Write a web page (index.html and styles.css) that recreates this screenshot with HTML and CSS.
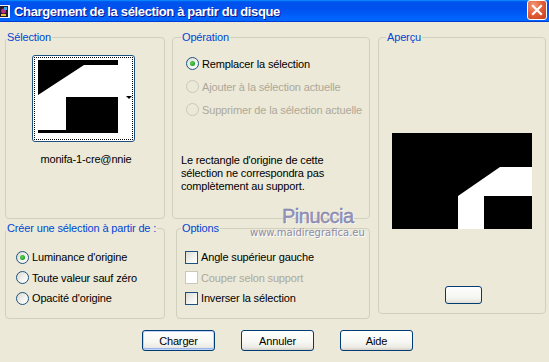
FILE: index.html
```html
<!DOCTYPE html>
<html lang="fr">
<head>
<meta charset="utf-8">
<title>Chargement de la sélection à partir du disque</title>
<link rel="stylesheet" href="styles.css">
</head>
<body>
<div class="titlebar">
  <svg class="app-icon" width="10" height="13" viewBox="0 0 10 13">
    <rect x="0" y="0" width="10" height="13" fill="#f4f4f4"/>
    <rect x="0" y="1" width="8" height="11" fill="#241a30"/>
    <circle cx="3.5" cy="6" r="2.5" fill="#c23088"/>
    <rect x="4" y="2" width="3" height="3" fill="#3aa0e8"/>
    <rect x="1" y="9" width="5" height="2" fill="#e6c232"/>
  </svg>
  <span class="title">Chargement de la sélection à partir du disque</span>
  <span class="close">
    <svg width="12" height="12" viewBox="0 0 12 12"><path d="M2 2 L10 10 M10 2 L2 10" stroke="#fff" stroke-width="2.2" stroke-linecap="square"/></svg>
  </span>
</div>

<div class="client">
  <div class="groups">
    <fieldset class="grp g-sel">
      <legend class="lg-sel">Sélection</legend>
      <div class="thumb">
        <div class="thumb-focus">
          <svg class="thumb-img" width="80" height="73" viewBox="0 0 80 73">
            <rect width="80" height="73" fill="#000"/>
            <polygon points="0,35 46,5 80,5 80,37 28,37 28,70 0,70" fill="#fff"/>
          </svg>
          <div class="thumb-side"><span class="arrow"></span></div>
        </div>
      </div>
      <div class="thumb-name">monifa-1-cre@nnie</div>
    </fieldset>

    <fieldset class="grp g-op">
      <legend class="lg-op">Opération</legend>
      <div class="op-list">
        <div class="row r23"><span class="radio checked"></span><span>Remplacer la sélection</span></div>
        <div class="row r23 disabled"><span class="radio off"></span><span>Ajouter à la sélection actuelle</span></div>
        <div class="row r23 disabled"><span class="radio off"></span><span>Supprimer de la sélection actuelle</span></div>
      </div>
      <p class="info">Le rectangle d'origine de cette<br>sélection ne correspondra pas<br>complètement au support.</p>
    </fieldset>

    <fieldset class="grp g-prev">
      <legend class="lg-prev">Aperçu</legend>
      <svg class="preview" width="140" height="96" viewBox="0 0 140 96">
        <rect width="140" height="96" fill="#000"/>
        <polygon points="66,63 108,34 140,34 140,63 92,63 92,96 66,96" fill="#fff"/>
      </svg>
      <div class="mini-btn"></div>
    </fieldset>

    <fieldset class="grp g-create">
      <legend class="lg-create">Créer une sélection à partir de :</legend>
      <div class="list create-list">
        <div class="row r20"><span class="radio checked"></span><span>Luminance d'origine</span></div>
        <div class="row r20"><span class="radio"></span><span>Toute valeur sauf zéro</span></div>
        <div class="row r20"><span class="radio"></span><span>Opacité d'origine</span></div>
      </div>
    </fieldset>

    <fieldset class="grp g-opts">
      <legend class="lg-opts">Options</legend>
      <div class="list opts-list">
        <div class="row r20"><span class="check"></span><span>Angle supérieur gauche</span></div>
        <div class="row r20 disabled"><span class="check off"></span><span>Couper selon support</span></div>
        <div class="row r20"><span class="check"></span><span>Inverser la sélection</span></div>
      </div>
    </fieldset>
  </div>

  <div class="buttons">
    <button class="btn default">Charger</button>
    <button class="btn">Annuler</button>
    <button class="btn">Aide</button>
  </div>
</div>

<div class="watermark">
  <div class="wm-name">Pinuccia</div>
  <div class="wm-url">www.maidiregrafica.eu</div>
</div>
</body>
</html>
```

FILE: styles.css
```css
* { box-sizing: border-box; }
html, body { margin: 0; }
body {
  width: 549px;
  height: 362px;
  overflow: hidden;
  position: relative;
  background: #ECE9D8;
  font-family: "Liberation Sans", Arial, sans-serif;
  font-size: 11px;
  letter-spacing: -0.15px;
  color: #000;
}

/* Title bar */
.titlebar {
  height: 22px;
  display: flex;
  align-items: center;
  padding-right: 2px;
  background: linear-gradient(180deg, #0997ff 0%, #0053ee 8%, #0050ee 40%, #0066ff 88%, #0066ff 93%, #005bff 95%, #003dd7 96%, #003dd7 100%);
}
.app-icon { flex: none; display: block; }
.title {
  flex: 1;
  margin-left: 4px;
  color: #fff;
  font-weight: bold;
  font-size: 13px;
  letter-spacing: -0.35px;
  text-shadow: 1px 1px 0 #0f1089;
  white-space: nowrap;
}
.close {
  flex: none;
  align-self: flex-start;
  width: 20px;
  height: 20px;
  border: 1px solid #fff;
  border-radius: 3px;
  background: radial-gradient(circle at 30% 25%, #f29a7c 0%, #e5603a 45%, #c63c1a 100%);
  display: flex;
  align-items: center;
  justify-content: center;
}
.close svg { display: block; }

/* Client area */
.client { padding: 8px 0 0 5px; }
.groups {
  display: grid;
  grid-template-columns: 160px 198px 169px;
  grid-template-rows: 189px 98px;
  column-gap: 7px;
  row-gap: 2px;
}
.grp {
  margin: 0;
  padding: 0;
  min-width: 0;
  border: 1px solid #D0D0BF;
  border-radius: 4px;
}
.grp legend {
  padding: 0 1px;
  color: #0046D5;
  font-size: 11px;
  line-height: 14px;
}
.lg-op { margin-left: 8px; }
.lg-prev { margin-left: 7px; }
.lg-opts { margin-left: 4px; }

.g-sel { grid-column: 1; grid-row: 1; }
.g-op { grid-column: 2; grid-row: 1; }
.g-prev {
  grid-column: 3;
  grid-row: 1 / 3;
  margin-left: 1px;
  height: 284px;
  align-self: start;
}
.g-create { grid-column: 1; grid-row: 2; }
.g-opts {
  grid-column: 2;
  grid-row: 2;
  margin-left: 4px;
  width: 194px;
  justify-self: start;
}

/* Selection thumbnail */
.thumb {
  margin: 11px 0 0 26px;
  width: 103px;
  height: 87px;
  border: 1px solid #1C5180;
  border-radius: 3px;
  background: #fff;
  padding: 1px;
}
.thumb-focus {
  height: 100%;
  border: 1px dotted #000;
  display: flex;
  padding: 2px 0 0 3px;
}
.thumb-img { display: block; flex: none; }
.thumb-side {
  flex: 1;
  display: flex;
  align-items: center;
  justify-content: flex-end;
  padding: 0 0 4px 0;
}
.arrow {
  width: 0;
  height: 0;
  border-left: 3px solid transparent;
  border-right: 3px solid transparent;
  border-top: 3px solid #000;
}
.thumb-name {
  margin-top: 10px;
  text-align: center;
  line-height: 14px;
  padding-left: 2px;
}

/* Rows with radios / checkboxes */
.row {
  display: flex;
  align-items: center;
  gap: 3px;
  white-space: nowrap;
}
.r23 { height: 23px; }
.r20 { height: 20.5px; }
.disabled { color: #ACA899; }

.op-list { padding: 8px 0 0 13px; }
.create-list { padding: 12px 0 0 10px; }
.opts-list { padding: 12px 0 0 8px; }

.radio {
  flex: none;
  width: 13px;
  height: 13px;
  border-radius: 50%;
  border: 1px solid #1C5180;
  background: linear-gradient(135deg, #dcdcd5 0%, #f4f4f0 60%, #ffffff 100%);
  display: flex;
  align-items: center;
  justify-content: center;
}
.radio.checked::after {
  content: "";
  width: 5px;
  height: 5px;
  border-radius: 50%;
  background: radial-gradient(circle at 40% 40%, #5fd35f 0%, #21a121 70%, #1a8a1a 100%);
}
.radio.off {
  border-color: #CAC8BB;
  background: #ECE9D8;
}
.check {
  flex: none;
  width: 13px;
  height: 13px;
  border: 1px solid #1C5180;
  background: linear-gradient(135deg, #dcdcd5 0%, #f4f4f0 60%, #ffffff 100%);
}
.check.off {
  border-color: #CAC8BB;
  background: #fff;
}

.info {
  margin: 33px 0 0 8px;
  line-height: 13px;
}

/* Preview */
.preview {
  display: block;
  margin: 89px 0 0 13px;
}
.mini-btn {
  margin: 57px 0 0 66px;
  width: 37px;
  height: 18px;
  border: 1px solid #003C74;
  border-radius: 3px;
  background: linear-gradient(180deg, #ffffff 0%, #f4f4f0 70%, #e3e0d6 100%);
}

/* Buttons */
.buttons {
  display: flex;
  gap: 26px;
  margin-top: 11px;
  padding-left: 137px;
}
.btn {
  width: 73px;
  height: 21px;
  padding: 0;
  border: 1px solid #003C74;
  border-radius: 3px;
  background: linear-gradient(180deg, #ffffff 0%, #f6f6f2 60%, #ecebe6 85%, #d6d0c5 100%);
  font-family: "Liberation Sans", Arial, sans-serif;
  font-size: 11px;
  letter-spacing: -0.15px;
  color: #000;
}
.btn.default {
  box-shadow: inset 0 0 0 1px #c1d3fb, inset 0 -1px 0 1px #98b8ea;
}

/* Watermark overlay */
.watermark {
  position: absolute;
  left: 0;
  top: 0;
  letter-spacing: 0;
}
.wm-name {
  position: absolute;
  left: 282px;
  top: 206px;
  font-family: "Liberation Sans", Arial, sans-serif;
  font-size: 20px;
  line-height: 20px;
  letter-spacing: -0.5px;
  color: #9494bc;
  -webkit-text-stroke: 0.4px #7c7ca6;
  text-shadow: 1px 1px 0 #ffffff;
  white-space: nowrap;
}
.wm-url {
  position: absolute;
  left: 250px;
  top: 227px;
  font-family: "DejaVu Sans", Verdana, sans-serif;
  font-size: 10px;
  line-height: 12px;
  color: #8a8aa6;
  text-shadow: 1px 1px 0 #ffffff;
  white-space: nowrap;
}
```
